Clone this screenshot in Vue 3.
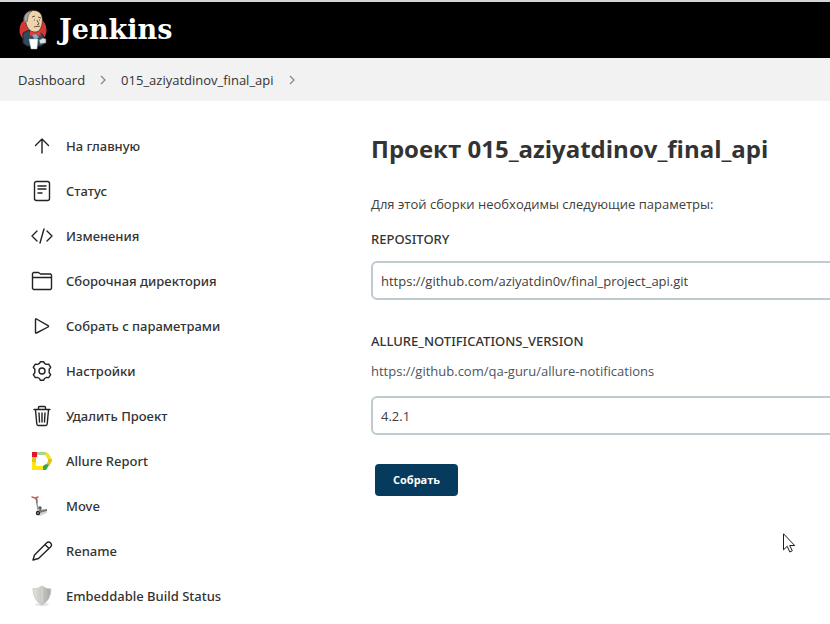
<script setup>
import { ref } from 'vue'

const repository = ref('https://github.com/aziyatdin0v/final_project_api.git')
const version = ref('4.2.1')

const tasks = [
  { icon: 'up', label: 'На главную' },
  { icon: 'status', label: 'Статус' },
  { icon: 'code', label: 'Изменения' },
  { icon: 'folder', label: 'Сборочная директория' },
  { icon: 'play', label: 'Собрать с параметрами' },
  { icon: 'gear', label: 'Настройки' },
  { icon: 'trash', label: 'Удалить Проект' },
  { icon: 'allure', label: 'Allure Report' },
  { icon: 'move', label: 'Move' },
  { icon: 'pencil', label: 'Rename' },
  { icon: 'shield', label: 'Embeddable Build Status' },
]
</script>

<template>
  <div class="page">
    <header class="header">
      <a class="brand" href="#">
        <svg class="butler" viewBox="0 0 30 40" aria-hidden="true">
          <circle cx="15" cy="20" r="13.500" fill="#d33833" />
          <path d="M5 23l6-3 4 5 6-3 4 3 1 9-3 2H9l-4-3z" fill="#2f4b5c" stroke="#182a35" />
          <path d="M7 5C9 1 15-0.500 19 1c5 2 6 7 5 13-1 5-3 8-7 8-5 0-8-4-9-9-3-1-3-5-1-8z" fill="#f0d2ad" stroke="#38302c" stroke-width=".7" />
          <path d="M6 9c0-4 3-8 8-8-2 2-4 3-4 6l-1 5c-2-1-3-1-3-3z" fill="#aaa8a3" stroke="#4a4643" stroke-width=".6" />
          <path d="M14 7l3-1M20 7l3 1M16 10h1M21 10h1M19 10l2 4-2 1M16 17c2-1 4 0 6-1" fill="none" stroke="#3a302b" stroke-width=".8" />
          <path d="M12 21l5 2 5-2 1 5-6-1-5 1z" fill="#e33a3a" />
          <path d="M14 25l4-1 3 3-4 3z" fill="#86a9bc" />
          <path d="M11 29h9l-1 10h-6z" fill="#fff" stroke="#9ba3a8" stroke-width=".5" />
          <path d="M21 30l4-2 3 1v4l-6 1z" fill="#dedede" stroke="#525252" stroke-width=".6" />
        </svg>
        <span>Jenkins</span>
      </a>
    </header>

    <nav class="crumbs" aria-label="Breadcrumb">
      <a href="#">Dashboard</a>
      <svg viewBox="0 0 8 12" aria-hidden="true"><path d="M2 2l4 4-4 4" /></svg>
      <a href="#">015_aziyatdinov_final_api</a>
      <svg viewBox="0 0 8 12" aria-hidden="true"><path d="M2 2l4 4-4 4" /></svg>
    </nav>

    <div class="body">
      <aside class="side">
        <a v-for="task in tasks" :key="task.icon" class="task" href="#">
          <svg class="icon" viewBox="0 0 22 22" aria-hidden="true">
            <path v-if="task.icon === 'up'" d="M11 18V4M4.500 10.500L11 4l6.500 6.500" />
            <g v-else-if="task.icon === 'status'">
              <rect x="3.500" y="1.500" width="15" height="19" rx="2" />
              <path d="M7 6h8M7 9h8M7 13h4" />
            </g>
            <path v-else-if="task.icon === 'code'" d="M6 6l-5 5 5 5M16 6l5 5-5 5M13 4L9 18" />
            <path v-else-if="task.icon === 'folder'" d="M1.500 18.500v-15l1-1h5l2 1.500h10l1 1v13.500l-1 1h-17zM1.500 7.500h19" />
            <path v-else-if="task.icon === 'play'" d="M4.500 4.500v13q0 1 1 .500l11.500-6q1-.700 0-1.400l-11.500-6.600q-1-.500-1 .500z" />
            <g v-else-if="task.icon === 'gear'">
              <path d="M8.500 3.400L9.300 1.700h3.400l.8 1.700 1.800 1 2.400-.2 2 3.200-1.500 1.900v3.400l1.500 1.900-2 3-2.400-.1-1.800 1-.8 1.800H9.300l-.8-1.800-1.800-1-2.400.1-2-3 1.500-1.900V9.300L2.300 7.400l2-3.200 2.400.2z" />
              <circle cx="11" cy="11" r="3" />
            </g>
            <g v-else-if="task.icon === 'trash'">
              <path d="M3 4.500h16M7.500 4V2.500q0-1 1-1h5q1 0 1 1V4M4.500 5l1.300 14q.100 1.500 1.500 1.500h7.400q1.400 0 1.500-1.500L17.500 5" />
              <path d="M8 8l.5 9M11 8v9M14 8l-.5 9" />
            </g>
            <g v-else-if="task.icon === 'allure'" class="flat">
              <path d="M1 6h4v7H1z" fill="#e6c41c" />
              <path d="M1 12h4v4h8v4H1z" fill="#ffe60c" />
              <path d="M1 2h5v5H1z" fill="#e3132c" />
              <path d="M6 2h9v3H6z" fill="#a6d598" />
              <path d="M15 2l3 2 3 6-3 1-4-6z" fill="#f4e02a" />
              <path d="M17 9h4v2l-3 5-3-1 2-4z" fill="#e0c41b" />
              <path d="M12 16l3-2 3 1-3 5h-3z" fill="#3da44b" />
            </g>
            <g v-else-if="task.icon === 'move'" class="flat">
              <path d="M5 17l4 1 7-2v2l-7 3-4-1z" fill="#d4d4cf" />
              <path d="M9 15l7-1v2l-7 2z" fill="#777974" />
              <path d="M5 3l2 12" stroke="#999" stroke-dasharray="2 1" />
              <path d="M1 2l3 1 3-1M4 3l1 1" stroke="#d75b5b" stroke-width="1.500" />
              <path d="M6 4v4M8 12l2 2-3 3" stroke="#444" stroke-width=".8" />
              <circle cx="7" cy="18" r="1.500" fill="#ddd" stroke="#222" />
              <circle cx="9" cy="13" r="1" fill="#fff" stroke="#555" />
            </g>
            <path v-else-if="task.icon === 'pencil'" d="M2 20l1.500-5L15.500 3q2-2 4 0t0 4L7.500 18.500zM14 4.500l4 4" />
            <g v-else class="flat">
              <defs>
                <linearGradient id="shield-fill">
                  <stop offset="0" stop-color="#e4e4df" />
                  <stop offset=".5" stop-color="#c6c7c2" />
                  <stop offset="1" stop-color="#a5a7a2" />
                </linearGradient>
              </defs>
              <ellipse cx="11" cy="19.500" rx="7" ry="1.500" fill="#e2e2e2" />
              <path d="M2 4q5 0 9-3 4 3 9 3 0 11-9 16Q2 15 2 4z" fill="url(#shield-fill)" stroke="#c6c7c3" stroke-width=".8" />
              <path d="M11 3v15" stroke="#e2e2e0" stroke-width=".8" stroke-dasharray="2 1" />
            </g>
          </svg>
          <span>{{ task.label }}</span>
        </a>
      </aside>

      <main class="main">
        <h1>Проект 015_aziyatdinov_final_api</h1>
        <p class="intro">Для этой сборки необходимы следующие параметры:</p>
        <form @submit.prevent>
          <div class="field">
            <label for="repository">REPOSITORY</label>
            <input id="repository" v-model="repository" type="text" />
          </div>
          <div class="field">
            <label for="version">ALLURE_NOTIFICATIONS_VERSION</label>
            <p class="hint">https://github.com/qa-guru/allure-notifications</p>
            <input id="version" v-model="version" type="text" />
          </div>
          <button class="build" type="submit">Собрать</button>
        </form>
      </main>
    </div>

    <svg class="cursor" viewBox="0 0 13 20" aria-hidden="true">
      <path d="M.5 .8v16l3.700-3.500 2.600 5.700 2.500-1.200-2.600-5.300h5z" />
    </svg>
  </div>
</template>

<style>
body {
  background: #fff;
}
</style>

<style scoped>
.page {
  position: relative;
  min-height: 100vh;
  overflow: hidden;
  border-top: 2px solid #d3d6d8;
  box-sizing: border-box;
  color: #404040;
  font-family: "Open Sans", "Noto Sans", sans-serif;
  font-size: 13px;
  line-height: 20px;
}

a {
  color: inherit;
  text-decoration: none;
}

.header {
  display: flex;
  align-items: center;
  height: 56px;
  padding: 0 18px;
  background: #000;
}

.brand {
  display: flex;
  align-items: center;
  gap: 11px;
  color: #fff;
  font: bold 27px/32px "DejaVu Serif", serif;
}

.butler {
  width: 30px;
  height: 40px;
}

.crumbs {
  display: flex;
  align-items: center;
  height: 43px;
  padding: 0 18px;
  gap: 14px;
  background: #f2f2f2;
  color: #333;
}

.crumbs svg {
  width: 8px;
  height: 12px;
  fill: none;
  stroke: #888;
  stroke-width: 1.3;
}

.body {
  display: flex;
}

.side {
  display: flex;
  flex: none;
  flex-direction: column;
  width: 340px;
  box-sizing: border-box;
  padding: 22px 0 0 31px;
}

.task {
  display: flex;
  align-items: center;
  gap: 13px;
  height: 45px;
  font-family: "Noto Sans", sans-serif;
  font-weight: 500;
  color: #333;
}

.icon {
  width: 22px;
  height: 22px;
  fill: none;
  stroke: #222;
  stroke-width: 1.4;
  stroke-linejoin: round;
  stroke-linecap: round;
}

.flat {
  stroke: none;
}

.main {
  flex: 1 0 auto;
  min-width: 500px;
  padding: 30px 0 0 31px;
}

h1 {
  margin: 0 0 27px;
  color: #333;
  font-size: 24px;
  line-height: 36px;
  font-weight: 700;
}

p {
  margin: 0;
}

.intro {
  margin-bottom: 15px;
}

.field {
  display: flex;
  flex-direction: column;
  margin-bottom: 31px;
}

.field label {
  margin-bottom: 12px;
  color: #333;
  font-family: "Noto Sans", sans-serif;
  font-weight: 500;
}

.hint {
  margin: -2px 0 15px;
  color: #4d545d;
}

.field input {
  height: 39px;
  box-sizing: border-box;
  padding: 0 8px;
  border: 2px solid #bfcccf;
  border-radius: 6px;
  background: #fff;
  color: #404040;
  font: inherit;
}

.build {
  height: 32px;
  margin: -2px 0 0 4px;
  padding: 0 18px;
  border: 0;
  border-radius: 4px;
  background: #073b5e;
  color: #fff;
  font: bold 11px/20px "Open Sans", "Noto Sans", sans-serif;
}

.cursor {
  position: absolute;
  top: 531px;
  left: 783px;
  width: 13px;
  height: 20px;
  fill: #fff;
  stroke: #1a1a2a;
}
</style>
